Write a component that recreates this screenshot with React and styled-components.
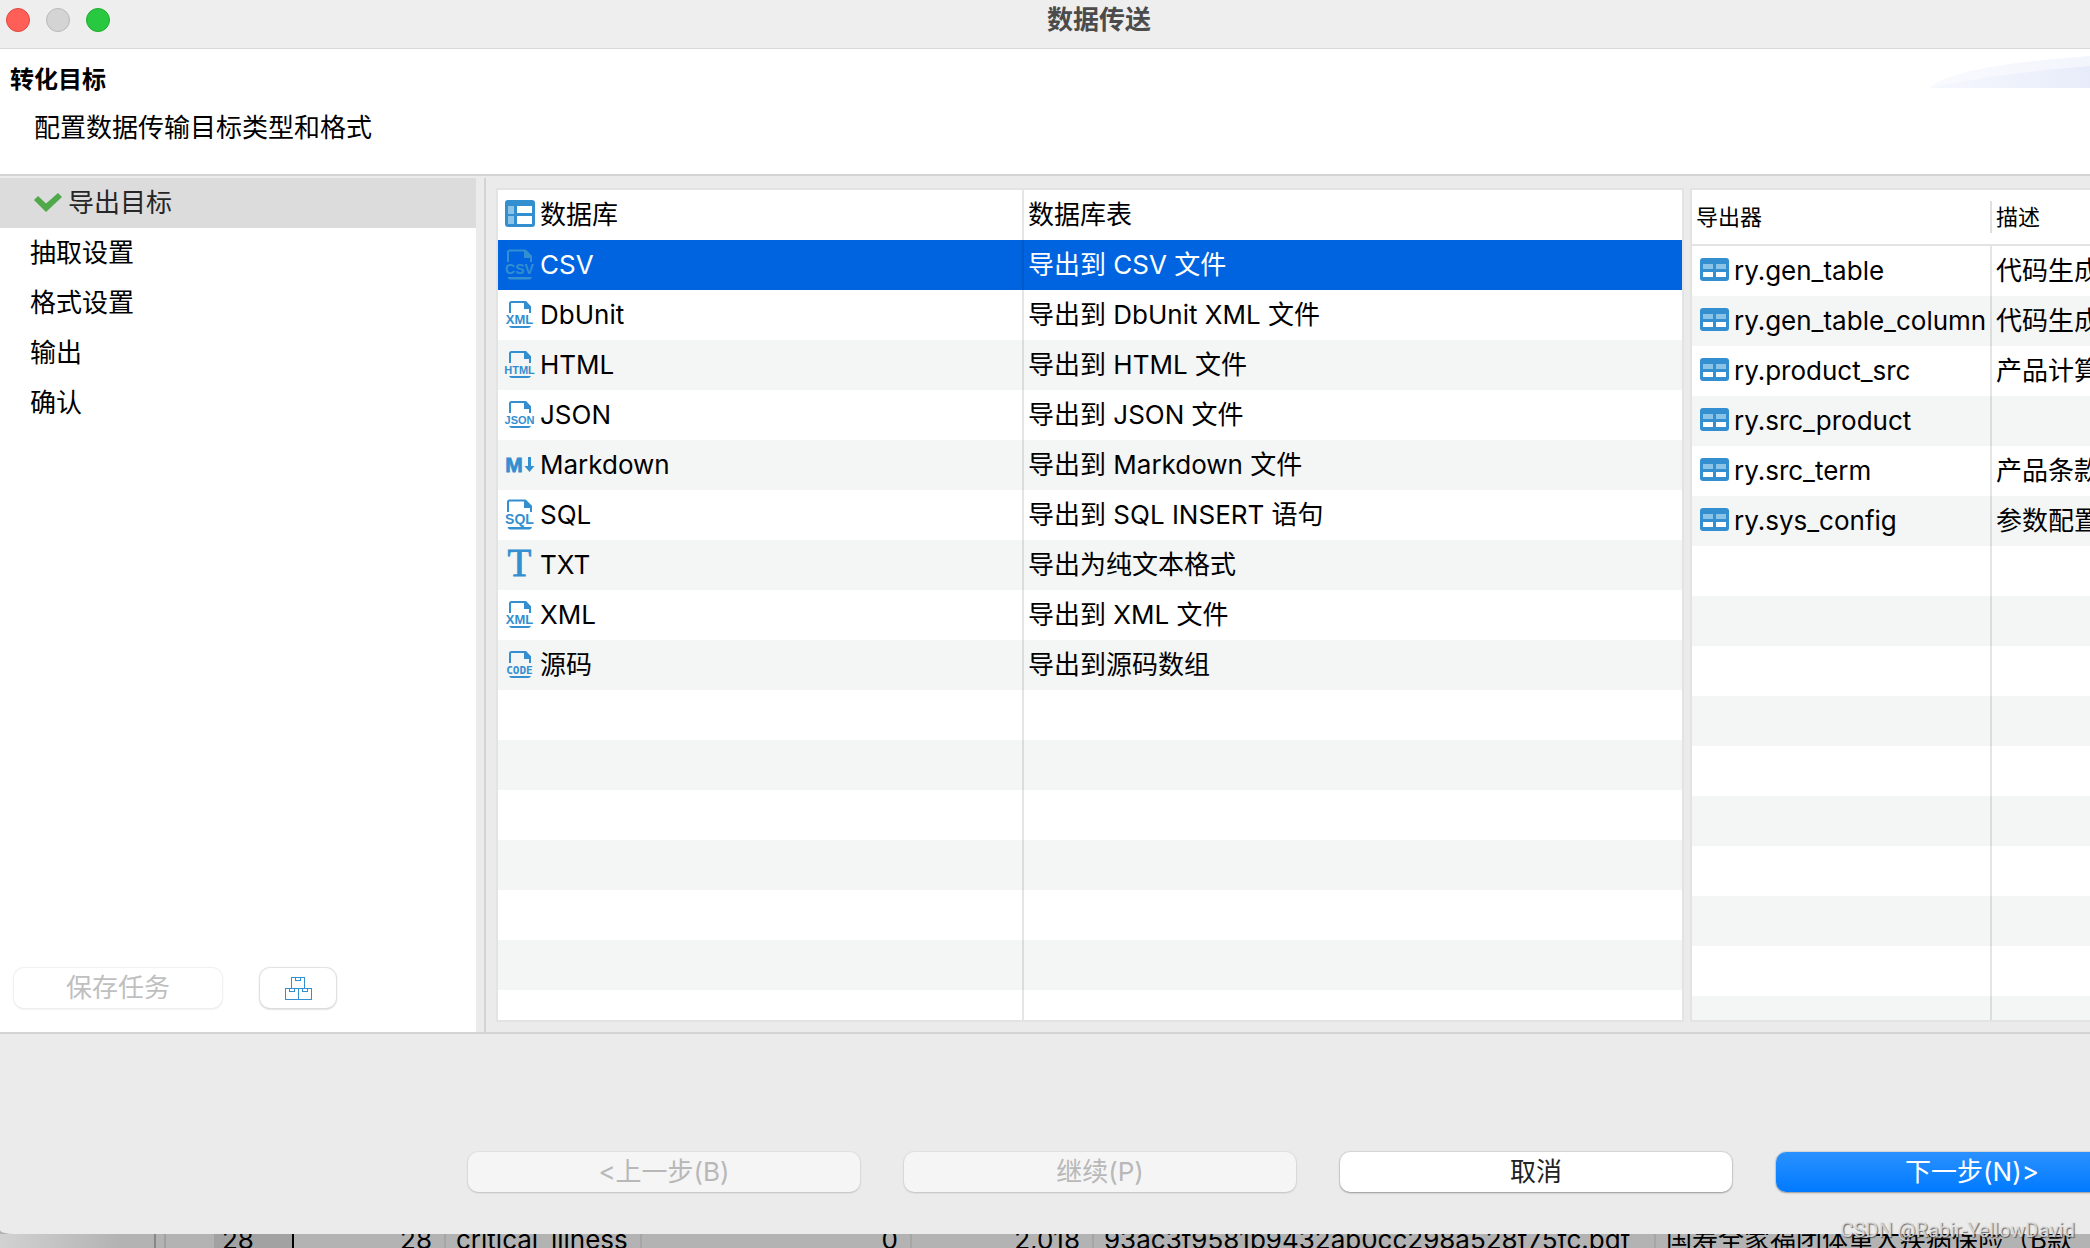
import React from "react";
import styled, { createGlobalStyle } from "styled-components";

const BLUE = "#338fcf";

const exporters = [
  { icon: "database", name: "数据库", text: "数据库表" },
  { icon: "CSV", name: "CSV", text: "导出到 CSV 文件", selected: true },
  { icon: "XML", name: "DbUnit", text: "导出到 DbUnit XML 文件" },
  { icon: "HTML", name: "HTML", text: "导出到 HTML 文件" },
  { icon: "JSON", name: "JSON", text: "导出到 JSON 文件" },
  { icon: "markdown", name: "Markdown", text: "导出到 Markdown 文件" },
  { icon: "SQL", name: "SQL", text: "导出到 SQL INSERT 语句" },
  { icon: "txt", name: "TXT", text: "导出为纯文本格式" },
  { icon: "XML", name: "XML", text: "导出到 XML 文件" },
  { icon: "CODE", name: "源码", text: "导出到源码数组" },
];

const sources = [
  { name: "ry.gen_table", text: "代码生成" },
  { name: "ry.gen_table_column", text: "代码生成" },
  { name: "ry.product_src", text: "产品计算" },
  { name: "ry.src_product", text: "" },
  { name: "ry.src_term", text: "产品条款" },
  { name: "ry.sys_config", text: "参数配置" },
];

const steps = ["抽取设置", "格式设置", "输出", "确认"];

const labelSizes = { CSV: 14, XML: 13, HTML: 11, JSON: 11, SQL: 14, CODE: 11 };

const FileIcon = ({ label }) => {
  const large = label === "CSV" || label === "SQL";
  return (
    <Icon viewBox="0 0 32 32" aria-hidden="true">
      {large ? (
        <>
          <path
            d="M4 13V3Q4 1.500 5.500 1.500H21L27 7.500V13"
            fill="none"
            stroke={BLUE}
            strokeWidth="2"
          />
          <path d="M20 1H22L28 7V9H20Z" fill={BLUE} />
          <path d="M3.500 28H28Q27.500 30.500 25 30.500H6.500Q4 30.500 3.500 28Z" fill={BLUE} />
        </>
      ) : (
        <>
          <path
            d="M6 14V4.500Q6 3 7.500 3H21L26 8V14"
            fill="none"
            stroke={BLUE}
            strokeWidth="2"
          />
          <path d="M20 2H22L27 7.500V10H20Z" fill={BLUE} />
          <path d="M5 27H27Q26.500 29 24 29H8Q5.500 29 5 27Z" fill={BLUE} />
        </>
      )}
      <IconLabel
        x="15.500"
        y="25"
        $size={labelSizes[label]}
        $mono={label === "CODE"}
      >
        {label}
      </IconLabel>
    </Icon>
  );
};

const DatabaseIcon = () => (
  <Icon viewBox="0 0 32 32" aria-hidden="true">
    <rect x="1" y="1" width="30" height="27" rx="3" fill={BLUE} />
    <path d="M4 7H10V15H4ZM4 17H10V25H4Z" fill="#8cc4e8" />
    <path d="M13 7H28V14H13ZM13 17H28V25H13Z" fill="#fff" />
  </Icon>
);

const MarkdownIcon = () => (
  <Icon viewBox="0 0 32 32" aria-hidden="true">
    <IconLabel x="10" y="23" $size={21} $heavy>
      M
    </IconLabel>
    <path d="M24 8H27V17H30.500L25.500 23L20.500 17H24Z" fill={BLUE} />
  </Icon>
);

const TextIcon = () => (
  <Icon viewBox="0 0 32 32" aria-hidden="true">
    <IconLabel x="15.500" y="27" $size={39} $serif>
      T
    </IconLabel>
  </Icon>
);

const TableIcon = () => (
  <Icon viewBox="0 0 32 32" aria-hidden="true">
    <rect x="2" y="3" width="29" height="23" rx="3" fill={BLUE} />
    <path d="M5 9H15V14H5ZM18 9H28V14H18Z" fill="#8cc4e8" />
    <path d="M5 17H15V22H5ZM18 17H28V22H18Z" fill="#fff" />
  </Icon>
);

const CheckIcon = () => (
  <CheckSvg viewBox="0 0 28 20" aria-hidden="true">
    <path d="M0 7L4 3L12 10.500L24 0L28 4L12 19Z" fill="#4fa94a" />
  </CheckSvg>
);

const BoxesIcon = () => (
  <BoxesSvg viewBox="0 0 27 23" aria-hidden="true">
    <g fill="none" stroke={BLUE} shapeRendering="crispEdges">
      <path d="M6.500 11.500V0.500H19.500V11.500M10.500 0.500V3.500H15.500V0.500" />
      <path d="M0.500 11.500H26.500V22.500H0.500ZM13.500 11.500V22.500" />
      <path d="M4.500 11.500V14.500H9.500V11.500M17.500 11.500V14.500H22.500V11.500" />
    </g>
  </BoxesSvg>
);

const ExporterIcon = ({ type }) => {
  if (type === "database") return <DatabaseIcon />;
  if (type === "markdown") return <MarkdownIcon />;
  if (type === "txt") return <TextIcon />;
  return <FileIcon label={type} />;
};

const EmptyRows = ({ count }) =>
  Array.from({ length: count }, (_, i) => (
    <Row key={i} aria-hidden="true">
      <NameCell />
      <TextCell />
    </Row>
  ));

const App = () => {
  return (
    <Screen>
      <GlobalStyle />
      <Dialog>
        <TitleBar>
          <Lights>
            <Light $color="#ff5f57" $edge="#e2463f" aria-label="关闭" />
            <Light $color="#d4d4d4" $edge="#b9b9b9" aria-label="最小化" disabled />
            <Light $color="#28c840" $edge="#1dad2b" aria-label="缩放" />
          </Lights>
          <WindowTitle>数据传送</WindowTitle>
        </TitleBar>

        <Banner>
          <div>
            <BannerTitle>转化目标</BannerTitle>
            <BannerText>配置数据传输目标类型和格式</BannerText>
          </div>
          <Swoosh viewBox="0 0 269 39" aria-hidden="true">
            <defs>
              <linearGradient id="outer">
                <stop offset="0" stopColor="#f9fafe" />
                <stop offset="1" stopColor="#eef2fb" />
              </linearGradient>
              <linearGradient id="inner">
                <stop offset="0" stopColor="#f5f8fd" />
                <stop offset="1" stopColor="#dfe4f8" />
              </linearGradient>
            </defs>
            <path d="M0 39C22 20 95 12 161 7Q220 2 269 0V39Z" fill="url(#outer)" />
            <path d="M0 39C40 30 100 22 161 17Q220 12 269 10V39Z" fill="url(#inner)" />
          </Swoosh>
        </Banner>

        <Body>
          <Sidebar>
            <nav>
              <Step $active aria-current="step">
                <CheckIcon />
                导出目标
              </Step>
              {steps.map((step) => (
                <Step key={step}>{step}</Step>
              ))}
            </nav>
            <TaskBar>
              <SaveButton disabled>保存任务</SaveButton>
              <BoxesButton aria-label="任务">
                <BoxesIcon />
              </BoxesButton>
            </TaskBar>
          </Sidebar>
          <Content>
            <Panel>
              <Table>
                <colgroup>
                  <Column $width={526} />
                  <col />
                </colgroup>
                <tbody>
                  {exporters.map((item) => (
                    <Row key={item.name} $selected={item.selected}>
                      <NameCell>
                        <Name>
                          <ExporterIcon type={item.icon} />
                          {item.name}
                        </Name>
                      </NameCell>
                      <TextCell>{item.text}</TextCell>
                    </Row>
                  ))}
                  <EmptyRows count={8} />
                </tbody>
              </Table>
            </Panel>
            <SourcePanel>
              <Table>
                <colgroup>
                  <Column $width={300} />
                  <col />
                </colgroup>
                <thead>
                  <tr>
                    <HeadCell>
                      <HeadLabel $divided>导出器</HeadLabel>
                    </HeadCell>
                    <HeadCell>
                      <HeadLabel>描述</HeadLabel>
                    </HeadCell>
                  </tr>
                </thead>
                <tbody>
                  {sources.map((item) => (
                    <Row key={item.name}>
                      <NameCell>
                        <Name>
                          <TableIcon />
                          {item.name}
                        </Name>
                      </NameCell>
                      <TextCell>{item.text}</TextCell>
                    </Row>
                  ))}
                  <EmptyRows count={10} />
                </tbody>
              </Table>
            </SourcePanel>
          </Content>
        </Body>

        <Footer>
          <Button disabled>&lt;上一步(B)</Button>
          <Button disabled>继续(P)</Button>
          <Button>取消</Button>
          <Button $primary>下一步(N)&gt;</Button>
        </Footer>
      </Dialog>

      <Backdrop>
        <BackCell $width={156} $line="#878787" />
        <BackCell $width={10} $line="#a0a0a0" />
        <BackCell $width={48} />
        <BackCell $width={80} $line="#000" $dark>
          28
        </BackCell>
        <BackCell $width={152} $line="#a6a6a6" $right>
          28
        </BackCell>
        <BackCell $width={196} $line="#a6a6a6">
          critical_illness
        </BackCell>
        <BackCell $width={270} $line="#a6a6a6" $right>
          0
        </BackCell>
        <BackCell $width={182} $line="#a6a6a6" $right>
          2,018
        </BackCell>
        <BackCell $width={562} $line="#a6a6a6">
          93ac3f9581b9432ab0cc298a528f75fc.pdf
        </BackCell>
        <BackCell $width={442}>国寿全家福团体重大疾病保险（B款</BackCell>
      </Backdrop>
      <Watermark>CSDN @Rabir-YellowDavid</Watermark>
    </Screen>
  );
};

const GlobalStyle = createGlobalStyle`
  * {
    box-sizing: border-box;
  }

  body {
    margin: 0;
    color: #000;
    font-family: Inter, "Noto Sans CJK SC", sans-serif;
    font-size: 26px;
    line-height: 40px;
  }

  button {
    padding: 0;
    border: 0;
    color: inherit;
    font: inherit;
  }
`;

const Screen = styled.div`
  position: relative;
  display: flex;
  flex-direction: column;
  height: 100vh;
  overflow: hidden;
  background: #b3b3b3;
`;

/* the window runs past the right edge of the screen */
const Dialog = styled.main`
  display: flex;
  flex: 1;
  flex-direction: column;
  width: calc(100% + 108px);
  min-height: 0;
  overflow: hidden;
  background: #ebebeb;
  border-bottom-left-radius: 14px 4px;
`;

const TitleBar = styled.header`
  display: grid;
  grid-template-columns: 1fr auto 1fr;
  align-items: start;
  height: 49px;
  background: #eeeeee;
  border-bottom: 1px solid #d8d8d8;
`;

const Lights = styled.div`
  display: flex;
  gap: 16px;
  padding: 8px 6px;
`;

const Light = styled.button`
  width: 24px;
  height: 24px;
  background: ${(p) => p.$color};
  border: 1px solid ${(p) => p.$edge};
  border-radius: 50%;
`;

const WindowTitle = styled.h1`
  margin: 0;
  color: #4b4b4b;
  font-size: 26px;
  font-weight: 700;
`;

const Banner = styled.section`
  display: flex;
  justify-content: space-between;
  height: 127px;
  background: #fff;
  border-bottom: 2px solid #d3d3d3;
`;

const BannerTitle = styled.h2`
  margin: 11px 0 8px 10px;
  font-size: 24px;
  font-weight: 700;
`;

const BannerText = styled.p`
  margin: 0 0 0 34px;
`;

const Swoosh = styled.svg`
  width: 269px;
  height: 39px;
`;

const Body = styled.div`
  display: flex;
  flex: 1;
  min-height: 0;
  border-bottom: 2px solid #d3d3d3;
`;

const Sidebar = styled.aside`
  display: flex;
  flex: none;
  flex-direction: column;
  justify-content: space-between;
  width: 476px;
  margin-top: 2px;
  background: #fff;
`;

const Step = styled.button`
  display: flex;
  align-items: center;
  gap: 6px;
  width: 100%;
  height: 50px;
  padding: 0 ${(p) => (p.$active ? 34 : 30)}px;
  background: ${(p) => (p.$active ? "#dcdcdc" : "#fff")};
  color: ${(p) => (p.$active ? "#262626" : "#000")};
`;

const CheckSvg = styled.svg`
  width: 28px;
  height: 20px;
`;

const TaskBar = styled.div`
  display: flex;
  gap: 38px;
  padding: 0 14px 24px;
`;

const SaveButton = styled.button`
  width: 208px;
  height: 40px;
  background: #fff;
  border-radius: 10px;
  box-shadow: 0 0 1px 1px #f0f0f0, 0 1px 2px #d8d8d8;
  color: #bfbfbf;
`;

const BoxesButton = styled.button`
  display: flex;
  align-items: center;
  justify-content: center;
  width: 76px;
  height: 40px;
  background: #fff;
  border-radius: 10px;
  box-shadow: 0 0 1px 1px #e0e0e0, 0 1px 2px #a8a8a8;
`;

const BoxesSvg = styled.svg`
  width: 27px;
  height: 23px;
`;

const Content = styled.div`
  display: flex;
  flex: 1;
  gap: 6px;
  min-width: 0;
  margin: 2px 0 0 8px;
  padding: 10px;
  border-left: 2px solid #d3d3d3;
`;

const Panel = styled.section`
  flex: 1;
  min-width: 0;
  overflow: hidden;
  background: #fff;
  border: 2px solid #e3e3e3;
`;

const SourcePanel = styled(Panel)`
  flex: none;
  width: 498px;
`;

const Table = styled.table`
  width: 100%;
  border-spacing: 0;
  table-layout: fixed;
  white-space: nowrap;
`;

const Column = styled.col`
  width: ${(p) => p.$width}px;
`;

const Row = styled.tr`
  height: 50px;

  &:nth-child(even) {
    background: #f4f5f5;
  }

  ${(p) =>
    p.$selected &&
    `&& {
      background: #0064e1;
      color: #fff;
    }`}
`;

const NameCell = styled.td`
  padding: 0 0 0 6px;
  border-right: 2px solid rgba(0, 0, 0, 0.1);
`;

const TextCell = styled.td`
  padding: 0 4px;
`;

const Name = styled.div`
  display: flex;
  align-items: center;
  gap: 4px;
`;

const HeadCell = styled.th`
  height: 56px;
  padding: 0;
  border-bottom: 2px solid #e3e3e3;
  font-size: 22px;
  font-weight: 400;
  text-align: left;
`;

const HeadLabel = styled.div`
  padding-left: 4px;
  border-right: ${(p) => (p.$divided ? "2px solid #e0e0e0" : "0")};
  line-height: 32px;
`;

const Icon = styled.svg`
  flex: none;
  width: 32px;
  height: 32px;
  overflow: visible;
`;

const IconLabel = styled.text`
  fill: ${BLUE};
  stroke: ${BLUE};
  stroke-width: ${(p) => (p.$heavy || p.$serif ? 0.8 : 0)};
  font-family: ${(p) =>
    p.$serif
      ? '"Liberation Serif", serif'
      : p.$mono
        ? '"DejaVu Sans Mono", monospace'
        : '"Liberation Sans", sans-serif'};
  font-size: ${(p) => p.$size}px;
  font-weight: ${(p) => (p.$serif ? 400 : 700)};
  text-anchor: middle;
`;

const Footer = styled.footer`
  display: flex;
  gap: 44px;
  justify-content: flex-end;
  padding: 118px 30px 42px;
`;

const Button = styled.button`
  width: 392px;
  height: 40px;
  background: ${(p) =>
    p.$primary ? "linear-gradient(#2a91ff, #007aff)" : "#fff"};
  border-radius: 10px;
  box-shadow: 0 0 1px 1px rgba(0, 0, 0, 0.08), 0 1px 2px rgba(0, 0, 0, 0.3);
  color: ${(p) => (p.$primary ? "#fff" : "#222")};

  &:disabled {
    background: #f5f5f5;
    box-shadow: 0 0 1px 1px rgba(0, 0, 0, 0.04), 0 1px 2px rgba(0, 0, 0, 0.15);
    color: #b8b8b8;
  }
`;

const Backdrop = styled.div`
  display: flex;
  flex: none;
  height: 14px;
  overflow: hidden;
  background: linear-gradient(90deg, #d2d2d2, #b3b3b3 120px);
  line-height: 12px;
  white-space: nowrap;
`;

const BackCell = styled.div`
  flex: none;
  width: ${(p) => p.$width}px;
  background: ${(p) => (p.$dark ? "#a2a2a2" : "transparent")};
  border-right: ${(p) => (p.$line ? `2px solid ${p.$line}` : "0")};
  text-align: ${(p) => (p.$right ? "right" : "left")};

  &:not(:empty) {
    padding: 0 12px 0 ${(p) => (p.$dark ? 8 : 10)}px;
  }
`;

const Watermark = styled.span`
  position: absolute;
  right: 15px;
  bottom: 6px;
  color: rgba(225, 225, 225, 0.85);
  font-family: Roboto, "Liberation Sans", sans-serif;
  font-size: 20px;
  line-height: 24px;
  text-shadow: 1px 1px 1px rgba(70, 70, 70, 0.8);
`;

export default App;
